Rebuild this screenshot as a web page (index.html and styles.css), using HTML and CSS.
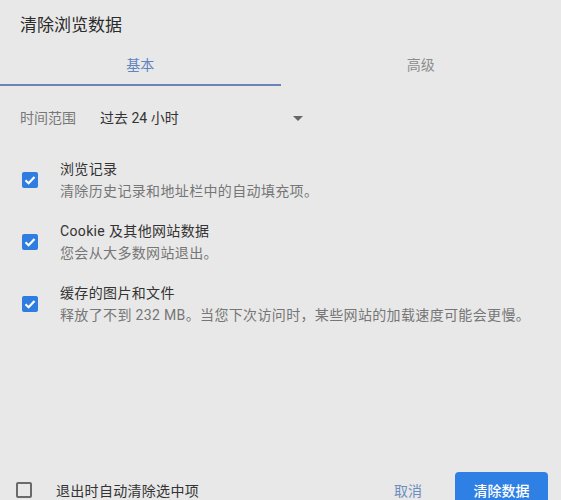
FILE: index.html
```html
<!DOCTYPE html>
<html lang="zh-CN">
<head>
<meta charset="utf-8">
<title>清除浏览数据</title>
<link rel="stylesheet" href="styles.css">
</head>
<body>
<div class="dialog">
  <div class="title">清除浏览数据</div>
  <div class="tabs">
    <div class="tab active">基本</div>
    <div class="tab">高级</div>
  </div>
  <div class="range">
    <span class="range-label">时间范围</span>
    <div class="select">
      <span>过去 24 小时</span>
      <span class="arrow"></span>
    </div>
  </div>
  <div class="items">
    <div class="item">
      <span class="cb checked"><svg viewBox="0 0 16 16" width="16" height="16"><path d="M3.5 8.2 L6.6 11.2 L12.5 5.1" fill="none" stroke="#fff" stroke-width="2.2"/></svg></span>
      <div class="texts">
        <div class="item-title">浏览记录</div>
        <div class="item-sub">清除历史记录和地址栏中的自动填充项。</div>
      </div>
    </div>
    <div class="item">
      <span class="cb checked"><svg viewBox="0 0 16 16" width="16" height="16"><path d="M3.5 8.2 L6.6 11.2 L12.5 5.1" fill="none" stroke="#fff" stroke-width="2.2"/></svg></span>
      <div class="texts">
        <div class="item-title">Cookie 及其他网站数据</div>
        <div class="item-sub">您会从大多数网站退出。</div>
      </div>
    </div>
    <div class="item">
      <span class="cb checked"><svg viewBox="0 0 16 16" width="16" height="16"><path d="M3.5 8.2 L6.6 11.2 L12.5 5.1" fill="none" stroke="#fff" stroke-width="2.2"/></svg></span>
      <div class="texts">
        <div class="item-title">缓存的图片和文件</div>
        <div class="item-sub">释放了不到 232 MB。当您下次访问时，某些网站的加载速度可能会更慢。</div>
      </div>
    </div>
  </div>
  <div class="footer">
    <span class="cb empty"></span>
    <span class="footer-label">退出时自动清除选中项</span>
    <span class="cancel">取消</span>
    <span class="primary">清除数据</span>
  </div>
</div>
</body>
</html>
```

FILE: styles.css
```css
html, body {
  margin: 0;
  padding: 0;
  overflow: hidden;
  background: #e8e8e8;
}
body {
  font-family: Roboto, "Noto Sans CJK SC", "Liberation Sans", sans-serif;
  font-size: 14px;
  color: #333;
}
.dialog {
  width: 561px;
}
.title {
  font-size: 17px;
  line-height: 24px;
  padding: 13px 20px 0;
  color: #2b2b2b;
}
.tabs {
  display: flex;
}
.tab {
  flex: 1;
  text-align: center;
  line-height: 20px;
  padding: 18px 0 9px;
  color: #8d8d8d;
  border-bottom: 2px solid transparent;
}
.tab.active {
  color: #5f84c0;
  border-bottom-color: #6b86b6;
}
.range {
  display: flex;
  align-items: center;
  margin-top: 22px;
  padding-left: 20px;
  line-height: 20px;
}
.range-label {
  width: 80px;
  color: #777;
}
.select {
  width: 203px;
  display: flex;
  align-items: center;
  justify-content: space-between;
  color: #333;
}
.arrow {
  width: 0;
  height: 0;
  border-left: 5px solid transparent;
  border-right: 5px solid transparent;
  border-top: 5px solid #666;
}
.items {
  margin-top: 30px;
  display: flex;
  flex-direction: column;
  gap: 18px;
}
.item {
  display: flex;
  align-items: center;
  padding-left: 22px;
}
.cb {
  width: 16px;
  height: 16px;
  box-sizing: border-box;
  border-radius: 2px;
  flex: none;
  display: block;
}
.cb svg {
  display: block;
}
.cb.checked {
  background: #2f7de0;
}
.cb.empty {
  border: 2px solid #6a6a6a;
}
.texts {
  margin-left: 22px;
  line-height: 22px;
  letter-spacing: 0.35px;
}
.item-title {
  color: #333;
}
.item-sub {
  color: #767676;
}
.footer {
  margin-top: 146px;
  height: 36px;
  display: flex;
  align-items: center;
  padding: 0 13px 0 16px;
}
.footer-label {
  margin-left: 24px;
  color: #333;
  flex: 1;
  letter-spacing: 0.3px;
}
.cancel {
  color: #6e8cc0;
  margin-right: 33px;
}
.primary {
  background: #2f80e4;
  color: #fff;
  border-radius: 4px;
  height: 36px;
  width: 93px;
  display: flex;
  align-items: center;
  justify-content: center;
  font-weight: 500;
}
```
